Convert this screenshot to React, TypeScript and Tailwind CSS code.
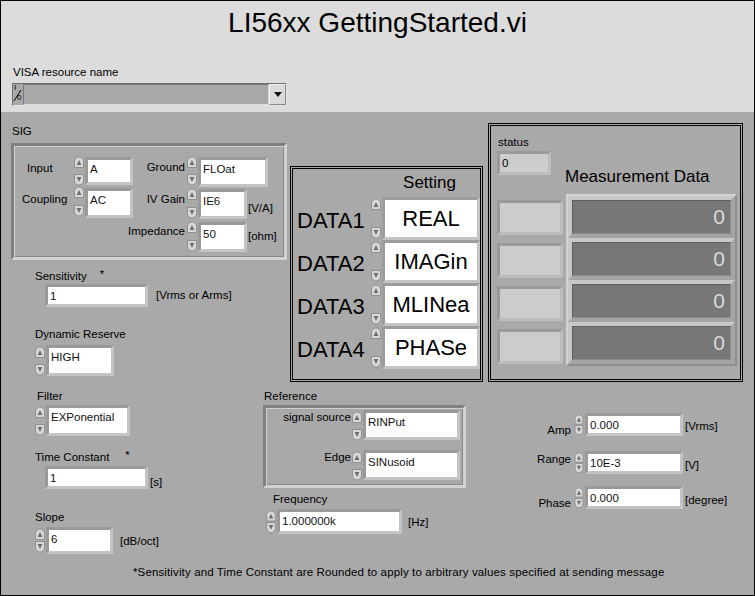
import React from "react";

const lbl = "text-[11.5px] leading-[14px] whitespace-nowrap text-black";

function Up() {
  return (
    <svg width="12" height="13" viewBox="0 0 12 13" className="block">
      <path d="M1.5 12.5 V6.5 A4.5 4.5 0 0 1 10.5 6.5 V12.5 Z" fill="#d8d8d8" stroke="#8e8e8e" strokeWidth="1" />
      <path d="M3.6 10 L6 5 L8.4 10 Z" fill="#6f6f6f" />
    </svg>
  );
}
function Down() {
  return (
    <svg width="12" height="13" viewBox="0 0 12 13" className="block">
      <path d="M1.5 0.5 V6.5 A4.5 4.5 0 0 0 10.5 6.5 V0.5 Z" fill="#d8d8d8" stroke="#8e8e8e" strokeWidth="1" />
      <path d="M3.6 3 L6 8 L8.4 3 Z" fill="#6f6f6f" />
    </svg>
  );
}
function Spin({ cls }: { cls: string }) {
  return (
    <div className={"flex flex-col justify-between w-[12px] shrink-0 " + cls}>
      <Up />
      <Down />
    </div>
  );
}
function Box({ cls, children }: { cls: string; children?: React.ReactNode }) {
  return (
    <div
      className={
        "bg-white border-[3px] border-[#c4c4c4] border-t-[#999999] border-l-[#999999] shrink-0 text-[11.5px] leading-[14px] pl-[2px] pt-[2px] text-[#111] whitespace-nowrap " +
        cls
      }
    >
      {children}
    </div>
  );
}
const groupCls =
  "border-[3px] border-t-[#808080] border-l-[#808080] border-b-[#d2d2d2] border-r-[#d2d2d2] shadow-[inset_1px_1px_0_#d0d0d0,inset_-1px_-1px_0_#8a8a8a]";

function RightLabel({ cls, children }: { cls: string; children: React.ReactNode }) {
  return (
    <div className={"flex justify-end shrink-0 " + cls}>
      <span className={lbl}>{children}</span>
    </div>
  );
}

function DataRow({ n, v }: { n: string; v: string }) {
  return (
    <div className="flex h-[43px]">
      <div className="w-[77px] pl-[4px] shrink-0">
        <div className="mt-[11px] text-[22px] leading-[26px] text-black">{n}</div>
      </div>
      <Spin cls="h-[43px]" />
      <div className="w-[98px] h-[43px] bg-white border-[3px] border-[#c4c4c4] border-t-[#9c9c9c] border-l-[#9c9c9c] flex items-center justify-center text-[22px] leading-[26px] text-black shrink-0">
        {v}
      </div>
    </div>
  );
}

function Display() {
  return (
    <div className="h-[42px] border-[4px] border-[#c8c8c8] border-b-[#a4a4a4] border-r-[#a4a4a4]">
      <div className="h-full bg-[#777777] border border-t-[#5e5e5e] border-l-[#5e5e5e] border-b-[#8c8c8c] border-r-[#8c8c8c] flex items-center justify-end pr-[5px] text-[21px] leading-[26px] text-[#dadada]">
        0
      </div>
    </div>
  );
}

function SmallInd({ cls }: { cls: string }) {
  return (
    <div className={"w-[66px] h-[35px] bg-[#cccccc] border-[3px] border-[#9a9a9a] border-b-[#bcbcbc] border-r-[#bcbcbc] " + cls} />
  );
}

export default function App() {
  return (
    <div className="w-[755px] h-[596px] border border-black flex flex-col bg-[#a9a9a9] font-['Liberation_Sans',Arial,sans-serif] overflow-hidden">
      {/* header */}
      <div className="h-[111px] bg-[#dcdcdc] shrink-0 flex flex-col">
        <div className="text-center text-[28px] leading-[28px] pt-[8px] text-black">LI56xx GettingStarted.vi</div>
        <div className={"mt-[28px] ml-[12px] " + lbl}>VISA resource name</div>
        <div className="mt-[4px] ml-[11px] w-[275px] h-[23px] flex bg-[#a8a8a8] border border-[#6e6e6e] border-b-[#e2e2e2] border-r-[#e2e2e2]">
          <div className="relative w-[10px] shrink-0">
            <span className="absolute left-[1px] top-[0px] text-[8px] leading-[8px] text-black">I</span>
            <svg width="10" height="21" className="absolute left-0 top-0">
              <line x1="1" y1="17" x2="8" y2="6" stroke="#000" strokeWidth="1" />
            </svg>
            <span className="absolute left-[4px] top-[10px] text-[8px] leading-[8px] text-black">0</span>
          </div>
          <div className="flex-1 border border-t-[#7a7a7a] border-l-[#7a7a7a] border-b-[#d8d8d8] border-r-[#d8d8d8] bg-[#a8a8a8]" />
          <div className="w-[17px] shrink-0 bg-[#dadada] border border-[#888] border-t-[#f2f2f2] border-l-[#f2f2f2] flex items-center justify-center">
            <svg width="8" height="5" viewBox="0 0 8 5">
              <path d="M0 0 L8 0 L4 5 Z" fill="#111" />
            </svg>
          </div>
        </div>
      </div>

      {/* body */}
      <div className="flex-1 flex flex-col">
        <div className="flex">
          {/* left column */}
          <div className="w-[263px] shrink-0 pl-[10px] flex flex-col items-start">
            <div className={"mt-[12px] ml-[1px] " + lbl}>SIG</div>
            <div className={"mt-[5px] w-[276px] h-[117px] flex pl-[8px] pt-[9px] shrink-0 " + groupCls}>
              {/* col A */}
              <div className="w-[112px] shrink-0 flex flex-col">
                <div className="flex items-start">
                  <div className="w-[51px] shrink-0 pl-[5px]">
                    <div className={"mt-[6px] " + lbl}>Input</div>
                  </div>
                  <Spin cls="h-[32px]" />
                  <Box cls="w-[48px] h-[28px] mt-[2px]">A</Box>
                </div>
                <div className="flex items-start -mt-[2px]">
                  <div className="w-[51px] shrink-0">
                    <div className={"mt-[7px] " + lbl}>Coupling</div>
                  </div>
                  <Spin cls="h-[33px]" />
                  <Box cls="w-[48px] h-[30px] mt-[3px]">AC</Box>
                </div>
              </div>
              {/* col B */}
              <div className="flex flex-col">
                <div className="flex items-start">
                  <RightLabel cls="w-[51px] mt-[5px]">Ground</RightLabel>
                  <Spin cls="h-[32px] ml-[1px]" />
                  <Box cls="w-[70px] h-[30px] mt-[2px]">FLOat</Box>
                </div>
                <div className="flex items-start">
                  <RightLabel cls="w-[51px] mt-[5px]">IV Gain</RightLabel>
                  <Spin cls="h-[33px] ml-[1px]" />
                  <Box cls="w-[49px] h-[30px] mt-[2px]">IE6</Box>
                  <span className={"ml-[1px] mt-[14px] " + lbl}>[V/A]</span>
                </div>
                <div className="flex items-start">
                  <RightLabel cls="w-[51px] mt-[4px]">Impedance</RightLabel>
                  <Spin cls="h-[33px] ml-[1px]" />
                  <Box cls="w-[49px] h-[30px] mt-[2px]">50</Box>
                  <span className={"ml-[1px] mt-[9px] " + lbl}>[ohm]</span>
                </div>
              </div>
            </div>

            <div className={"mt-[9px] ml-[24px] flex " + lbl}>
              <span>Sensitivity</span>
              <span className="ml-[13px] -mt-[2px]">*</span>
            </div>
            <div className="mt-[1px] ml-[34px] flex items-start">
              <Box cls="w-[103px] h-[23px]">1</Box>
              <span className={"ml-[8px] mt-[4px] " + lbl}>[Vrms or Arms]</span>
            </div>

            <div className={"mt-[20px] ml-[24px] " + lbl}>Dynamic Reserve</div>
            <div className="mt-[4px] ml-[23px] flex items-start">
              <Spin cls="h-[32px]" />
              <Box cls="w-[68px] h-[31px]">HIGH</Box>
            </div>

            <div className={"mt-[12px] ml-[26px] " + lbl}>Filter</div>
            <div className="mt-[2px] ml-[23px] flex items-start">
              <Spin cls="h-[32px]" />
              <Box cls="w-[84px] h-[31px]">EXPonential</Box>
            </div>

            <div className={"mt-[13px] ml-[24px] flex " + lbl}>
              <span>Time Constant</span>
              <span className="ml-[16px] -mt-[2px]">*</span>
            </div>
            <div className="mt-[2px] ml-[34px] flex items-start">
              <Box cls="w-[103px] h-[23px]">1</Box>
              <span className={"ml-[2px] mt-[9px] " + lbl}>[s]</span>
            </div>

            <div className={"mt-[21px] ml-[24px] " + lbl}>Slope</div>
            <div className="mt-[3px] ml-[23px] flex items-start">
              <Spin cls="h-[27px]" />
              <Box cls="w-[67px] h-[27px]">6</Box>
              <span className={"ml-[7px] mt-[7px] " + lbl}>[dB/oct]</span>
            </div>
          </div>

          {/* middle column */}
          <div className="w-[223px] shrink-0 flex flex-col items-start">
            <div className="mt-[54px] ml-[26px] w-[193px] h-[216px] border-[3px] border-double border-black flex flex-col shrink-0">
              <div className="mt-[4px] pr-[24px] text-right text-[17px] leading-[20px] text-black">Setting</div>
              <div className="mt-[4px] flex flex-col">
                <DataRow n="DATA1" v="REAL" />
                <DataRow n="DATA2" v="IMAGin" />
                <DataRow n="DATA3" v="MLINea" />
                <DataRow n="DATA4" v="PHASe" />
              </div>
            </div>

            <div className={"mt-[7px] " + lbl}>Reference</div>
            <div className={"mt-[2px] -ml-[1px] w-[203px] h-[83px] flex flex-col pt-[2px] shrink-0 " + groupCls}>
              <div className="flex items-start">
                <RightLabel cls="w-[85px]">signal source</RightLabel>
                <Spin cls="h-[32px]" />
                <Box cls="w-[97px] h-[30px]">RINPut</Box>
              </div>
              <div className="flex items-start mt-[8px]">
                <RightLabel cls="w-[85px]">Edge</RightLabel>
                <Spin cls="h-[32px]" />
                <Box cls="w-[97px] h-[30px]">SINusoid</Box>
              </div>
            </div>

            <div className={"mt-[4px] ml-[9px] " + lbl}>Frequency</div>
            <div className="mt-[3px] ml-[1px] flex items-start">
              <Spin cls="h-[25px]" />
              <Box cls="w-[125px] h-[25px]">1.000000k</Box>
              <span className={"ml-[6px] mt-[6px] " + lbl}>[Hz]</span>
            </div>
          </div>

          {/* right column */}
          <div className="flex-1 flex flex-col items-start">
            <div className="mt-[11px] ml-[1px] w-[255px] h-[259px] border-[3px] border-double border-black flex flex-col shrink-0">
              <div className={"mt-[9px] pl-[7px] " + lbl}>status</div>
              <div className="flex">
                <div className="pl-[6px] w-[72px] shrink-0 flex flex-col">
                  <div className="mt-[2px] w-[54px] h-[24px] bg-[#cdcdcd] border-[3px] border-[#9a9a9a] border-b-[#bdbdbd] border-r-[#bdbdbd] text-[11.5px] leading-[14px] pl-[2px] pt-[2px] text-black">
                    0
                  </div>
                  <SmallInd cls="mt-[25px]" />
                  <SmallInd cls="mt-[8px]" />
                  <SmallInd cls="mt-[8px]" />
                  <SmallInd cls="mt-[8px]" />
                </div>
                <div className="ml-[3px] w-[171px] shrink-0 flex flex-col">
                  <div className="mt-[18px] -ml-[1px] text-[17px] leading-[20px] text-black whitespace-nowrap">Measurement Data</div>
                  <div className="mt-[7px] border-[2px] border-[#d2d2d2] border-b-[#8e8e8e] border-r-[#8e8e8e] flex flex-col">
                    <Display />
                    <Display />
                    <Display />
                    <Display />
                  </div>
                </div>
              </div>
            </div>

            <div className="mt-[31px] flex items-start">
              <RightLabel cls="w-[84px] mt-[10px]">Amp</RightLabel>
              <Spin cls="h-[23px] ml-[2px]" />
              <Box cls="w-[98px] h-[23px]">0.000</Box>
              <span className={"ml-[2px] mt-[6px] " + lbl}>[Vrms]</span>
            </div>
            <div className="mt-[14px] flex items-start">
              <RightLabel cls="w-[84px] mt-[1px]">Range</RightLabel>
              <Spin cls="h-[23px] ml-[2px]" />
              <Box cls="w-[98px] h-[23px]">10E-3</Box>
              <span className={"ml-[2px] mt-[7px] " + lbl}>[V]</span>
            </div>
            <div className="mt-[12px] flex items-start">
              <RightLabel cls="w-[84px] mt-[10px]">Phase</RightLabel>
              <Spin cls="h-[23px] ml-[2px]" />
              <Box cls="w-[98px] h-[23px]">0.000</Box>
              <span className={"ml-[2px] mt-[7px] " + lbl}>[degree]</span>
            </div>
          </div>
        </div>

        <div className={"mt-auto pl-[132px] pb-[16px] tracking-[0.13px] " + lbl}>
          *Sensitivity and Time Constant are Rounded to apply to arbitrary values specified at sending message
        </div>
      </div>
    </div>
  );
}
